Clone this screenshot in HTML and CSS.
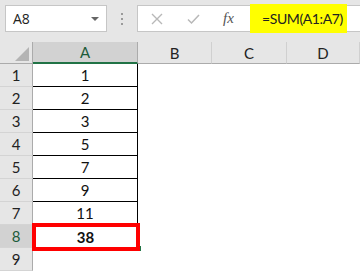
FILE: index.html
```html
<!DOCTYPE html>
<html lang="en">
<head>
    <meta charset="UTF-8">
    <title>SUM in Excel</title>
    <link rel="stylesheet" href="styles.css">
</head>
<body>
    <div class="toolbar">
        <div class="namebox">
            <span>A8</span>
            <span class="caret"></span>
        </div>
        <div class="grip">
            <i></i><i></i><i></i>
        </div>
        <div class="formula">
            <div class="tools">
                <svg class="tool" width="12" height="12" viewBox="0 0 12 12">
                    <path d="M1 1 L11 11 M11 1 L1 11" stroke="#b8b8b8" stroke-width="1.4" fill="none"/>
                </svg>
                <svg class="tool" width="13" height="12" viewBox="0 0 13 12">
                    <path d="M1 6.5 L4.5 10 L12 2" stroke="#b8b8b8" stroke-width="1.5" fill="none"/>
                </svg>
                <span class="fx">fx</span>
            </div>
            <div class="highlight">=SUM(A1:A7)</div>
        </div>
    </div>

    <div class="sheet">
        <div class="corner"><span class="tri"></span></div>
        <div class="colhead active">A</div>
        <div class="colhead">B</div>
        <div class="colhead">C</div>
        <div class="colhead">D</div>

        <div class="rowhead">1</div><div class="cell boxed">1</div><div></div><div></div><div></div>
        <div class="rowhead">2</div><div class="cell boxed">2</div><div></div><div></div><div></div>
        <div class="rowhead">3</div><div class="cell boxed">3</div><div></div><div></div><div></div>
        <div class="rowhead">4</div><div class="cell boxed">5</div><div></div><div></div><div></div>
        <div class="rowhead">5</div><div class="cell boxed">7</div><div></div><div></div><div></div>
        <div class="rowhead">6</div><div class="cell boxed">9</div><div></div><div></div><div></div>
        <div class="rowhead">7</div><div class="cell boxed">11</div><div></div><div></div><div></div>
        <div class="rowhead active">8</div><div class="cell total">38<span class="handle"></span></div><div></div><div></div><div></div>
        <div class="rowhead">9</div><div class="cell"></div><div></div><div></div><div></div>
    </div>
</body>
</html>
```

FILE: styles.css
```css
* {
    box-sizing: border-box;
}
body {
    margin: 0;
    width: 360px;
    height: 272px;
    overflow: hidden;
    background-color: #fff;
    font-family: Lato, "Open Sans", sans-serif;
    color: #222;
}
.toolbar {
    display: flex;
    align-items: flex-start;
    height: 42px;
    padding: 5px 0 0 5px;
    background-color: #e6e6e6;
}
.namebox {
    display: flex;
    align-items: center;
    justify-content: space-between;
    width: 102px;
    height: 27px;
    padding: 0 7px 0 7px;
    background-color: #fff;
    border: 1px solid #c6c6c6;
    font-family: "Open Sans", sans-serif;
    font-size: 14px;
    color: #222;
}
.caret {
    width: 0;
    height: 0;
    border-left: 4px solid transparent;
    border-right: 4px solid transparent;
    border-top: 4px solid #666;
}
.grip {
    display: flex;
    flex-direction: column;
    align-items: center;
    gap: 3px;
    width: 30px;
    padding-top: 8px;
}
.grip i {
    display: block;
    width: 2px;
    height: 2px;
    background-color: #9a9a9a;
}
.formula {
    flex: 1;
    display: flex;
    align-items: center;
    height: 27px;
    background-color: #fff;
    border: 1px solid #c6c6c6;
    border-right: none;
}
.tools {
    display: flex;
    align-items: center;
    width: 112px;
    padding-left: 13px;
}
.tool {
    margin-right: 24px;
}
.fx {
    margin-left: -1px;
    font-family: "Liberation Serif", serif;
    font-style: italic;
    font-size: 15px;
    color: #555;
}
.highlight {
    display: flex;
    align-items: center;
    flex-shrink: 0;
    width: 97px;
    height: 29px;
    padding-left: 12px;
    background-color: #ffff00;
    font-family: Lato, sans-serif;
    font-size: 14px;
    letter-spacing: -0.4px;
    color: #222;
}
.sheet {
    display: grid;
    grid-template-columns: 33px 105px 74px 75px 73px;
    grid-template-rows: 22px;
    grid-auto-rows: 23px;
}
.corner {
    position: relative;
    background-color: #e6e6e6;
    border-right: 1px solid #ababab;
    border-bottom: 1px solid #ababab;
}
.tri {
    position: absolute;
    right: 3px;
    bottom: 2px;
    width: 0;
    height: 0;
    border-left: 14px solid transparent;
    border-bottom: 14px solid #b4b4b4;
}
.colhead {
    display: flex;
    align-items: center;
    justify-content: center;
    background-color: #e6e6e6;
    border-right: 1px solid #d0d0d0;
    border-bottom: 1px solid #ababab;
    font-size: 15px;
    color: #222;
}
.colhead.active {
    background-color: #d2d2d2;
    border-bottom: 2px solid #217346;
    border-right: 1px solid #ababab;
    color: #1d5b3a;
}
.rowhead {
    display: flex;
    align-items: center;
    justify-content: center;
    background-color: #e6e6e6;
    border-right: 1px solid #ababab;
    border-bottom: 1px solid #d4d4d4;
    font-size: 15px;
    color: #222;
}
.rowhead.active {
    background-color: #d2d2d2;
    color: #1d5b3a;
}
.cell {
    position: relative;
    display: flex;
    align-items: center;
    justify-content: center;
    font-size: 15px;
    color: #111;
}
.cell.boxed {
    border-right: 1px solid #000;
    border-bottom: 1px solid #000;
}
.cell.total {
    font-weight: bold;
}
.cell.total::after {
    content: "";
    position: absolute;
    top: -2px;
    left: -1px;
    right: -2px;
    bottom: -3px;
    border: 4px solid #ff0000;
}
.handle {
    position: absolute;
    right: -3px;
    bottom: -3px;
    width: 5px;
    height: 5px;
    background-color: #217346;
}
```
